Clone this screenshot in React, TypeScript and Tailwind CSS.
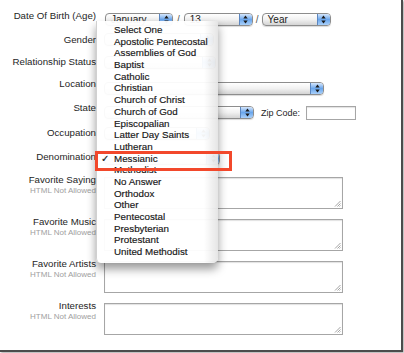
import React from "react";

const options = [
  "Select One",
  "Apostolic Pentecostal",
  "Assemblies of God",
  "Baptist",
  "Catholic",
  "Christian",
  "Church of Christ",
  "Church of God",
  "Episcopalian",
  "Latter Day Saints",
  "Lutheran",
  "Messianic",
  "Methodist",
  "No Answer",
  "Orthodox",
  "Other",
  "Pentecostal",
  "Presbyterian",
  "Protestant",
  "United Methodist",
];

const Arrows = () => (
  <svg width="5" height="9" viewBox="0 0 5 9">
    <path d="M2.5 0.5 L4.7 3.4 L0.3 3.4 Z" fill="#1a1a1a" />
    <path d="M2.5 8.5 L4.7 5.6 L0.3 5.6 Z" fill="#1a1a1a" />
  </svg>
);

const Select = ({ text = "", className = "" }: { text?: string; className?: string }) => (
  <div
    className={`flex h-[13px] items-center overflow-hidden rounded-[4px] border border-[#8d8d8d] bg-linear-to-b from-white via-[#f1f1f1] to-[#d4d4d4] shadow-[0_1px_1px_rgba(0,0,0,0.15)] ${className}`}
  >
    <span className="pl-[5px] text-[10px] leading-[11px] text-[#1c1c1c] font-['Liberation_Sans',sans-serif]">
      {text}
    </span>
    <span className="ml-auto flex h-full w-[13px] items-center justify-center border-l border-[#5b86c0] bg-linear-to-b from-[#d5e6fb] via-[#6aa6ec] to-[#a9d0fa]">
      <Arrows />
    </span>
  </div>
);

const Grip = () => (
  <svg className="absolute bottom-[1px] right-[1px]" width="7" height="7" viewBox="0 0 7 7">
    <path d="M6.5 1 L1 6.5 M6.5 3.5 L3.5 6.5 M6.5 5.5 L5.5 6.5" stroke="#8a8a8a" strokeWidth="0.8" />
  </svg>
);

const Textarea = () => (
  <div className="relative mt-[3px] h-[32px] w-[239px] border border-[#a6a6a6] bg-white shadow-[inset_0_1px_1px_rgba(0,0,0,0.12)]">
    <Grip />
  </div>
);

const Label = ({ children, className = "" }: { children: React.ReactNode; className?: string }) => (
  <div className={`w-[96px] shrink-0 text-right text-[9.7px] leading-[12px] text-[#1e1e1e] ${className}`}>
    {children}
  </div>
);

const TextRow = ({ label }: { label: string }) => (
  <div className="flex h-[42px] items-start gap-[8px]">
    <div className="w-[96px] shrink-0 text-right">
      <div className="text-[9.7px] leading-[12px] text-[#1e1e1e]">{label}</div>
      <div className="text-[8px] leading-[10px] text-[#a0a0a0]">HTML Not Allowed</div>
    </div>
    <Textarea />
  </div>
);

export default function App() {
  return (
    <div className="min-h-[353px] w-[404px] bg-white font-['Liberation_Sans',Arial,sans-serif]">
      <div className="relative h-[352px] w-[403px] border-b-2 border-r-2 border-[#4c4c4c] bg-white shadow-[1px_1px_2px_rgba(0,0,0,0.35)]">
        <div className="flex flex-col">
          {/* date of birth */}
          <div className="flex h-[29px] items-start gap-[8px]">
            <Label className="mt-[10px]">Date Of Birth (Age)</Label>
            <div className="mt-[12px] flex items-center text-[10px] text-[#555]">
              <Select text="January" className="ml-[1px] w-[68px]" />
              <span className="mx-[4px]">/</span>
              <Select text="13" className="w-[69px]" />
              <span className="mx-[3px]">/</span>
              <Select text="Year" className="w-[69px]" />
            </div>
          </div>

          <div className="flex h-[22px] items-start gap-[8px]">
            <Label className="mt-[5px]">Gender</Label>
            <Select className="mt-[4px] w-[110px]" />
          </div>

          <div className="flex h-[22px] items-start gap-[8px]">
            <Label className="mt-[5px]">Relationship Status</Label>
            <Select className="mt-[5px] w-[112px]" />
          </div>

          <div className="flex h-[27px] items-start gap-[8px]">
            <Label className="mt-[5px]">Location</Label>
            <Select className="mt-[9px] w-[220px]" />
          </div>

          <div className="flex h-[24px] items-start gap-[8px]">
            <Label className="mt-[2px]">State</Label>
            <div className="mt-[6px] flex items-start">
              <Select className="w-[150px]" />
              <span className="ml-[7px] mt-[1px] text-[9px] leading-[12px] text-[#1e1e1e]">Zip Code:</span>
              <div className="ml-[6px] h-[14px] w-[50px] border border-[#a6a6a6] bg-white shadow-[inset_0_1px_1px_rgba(0,0,0,0.12)]" />
            </div>
          </div>

          <div className="flex h-[24px] items-start gap-[8px]">
            <Label className="mt-[3px]">Occupation</Label>
            <Select className="mt-[3px] w-[106px]" />
          </div>

          <div className="flex h-[26px] items-start gap-[8px]">
            <Label className="mt-[3px]">Denomination</Label>
            <Select className="mt-[4px] w-[116px]" />
          </div>

          <TextRow label="Favorite Saying" />
          <TextRow label="Favorite Music" />
          <TextRow label="Favorite Artists" />
          <TextRow label="Interests" />
        </div>

        {/* open dropdown menu */}
        <div className="absolute left-[96px] top-[21px] h-[242px] w-[122px] overflow-hidden rounded-b-[5px] border-l border-[#d0d0d0] bg-white/95 pt-[3px] shadow-[0_6px_10px_rgba(0,0,0,0.4)]">
          <div className="pointer-events-none absolute inset-y-0 right-0 w-[14px] bg-linear-to-r from-transparent to-[rgba(0,0,0,0.10)]" />
          {options.map((o) => (
            <div
              key={o}
              className="relative h-[11.7px] pl-[17px] text-[9.8px] leading-[11.7px] text-[#151515] [-webkit-text-stroke:0.15px_#151515]"
            >
              {o === "Messianic" && <span className="absolute left-[4px] top-0">✓</span>}
              {o}
            </div>
          ))}
        </div>

        {/* highlight box */}
        <div className="absolute left-[95px] top-[151px] h-[20px] w-[137px] border-[3px] border-[#f2482b]" />
      </div>
    </div>
  );
}
